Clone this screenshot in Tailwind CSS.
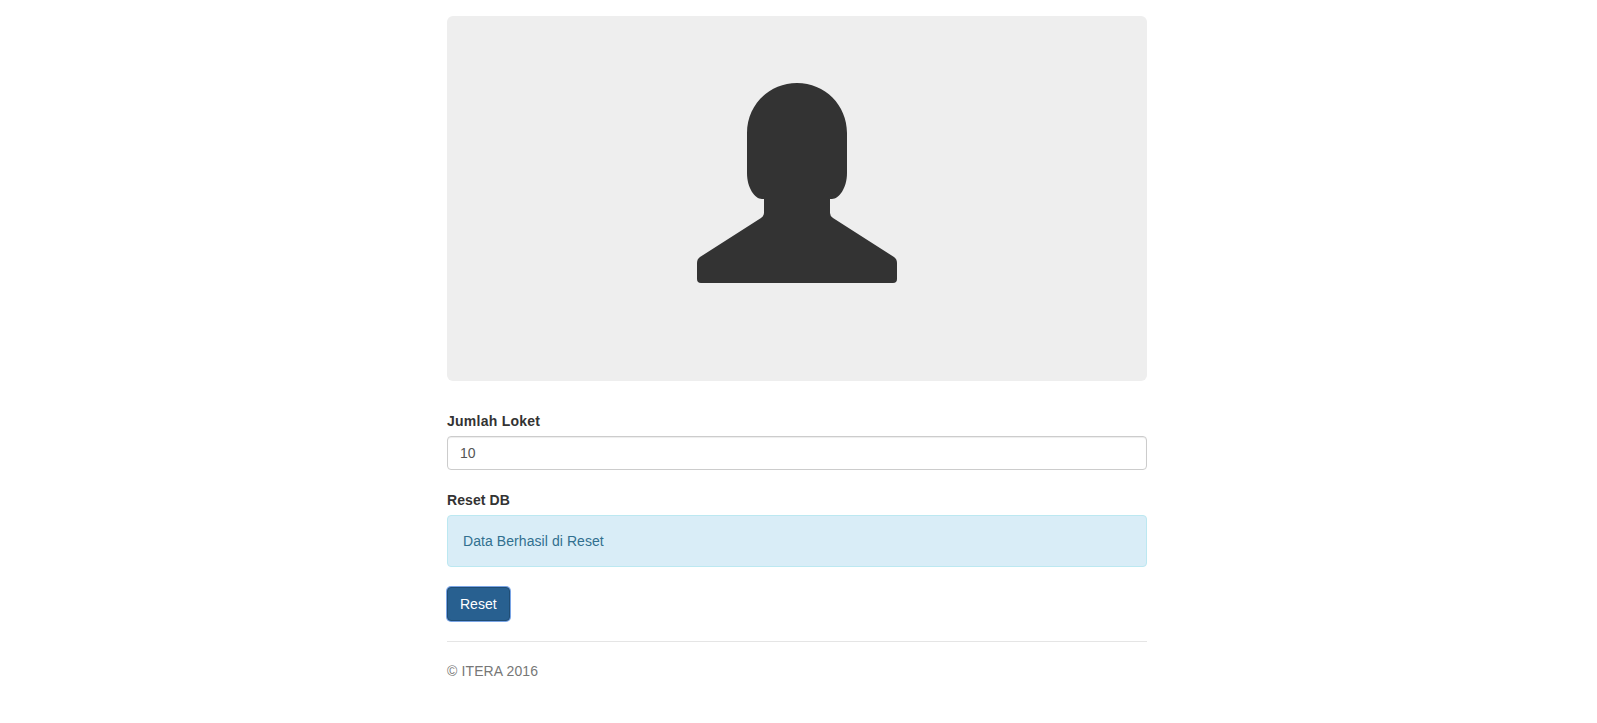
<!DOCTYPE html>
<html lang="id">
<head>
<meta charset="utf-8">
<title>Reset DB</title>
<script src="https://cdn.jsdelivr.net/npm/@tailwindcss/browser@4"></script>
</head>
<body class="bg-white font-['Liberation_Sans',Arial,sans-serif] text-[14px] leading-[20px] text-[#333]">
<div class="ml-[447px] w-[700px] pt-4">
  <div class="flex h-[365px] items-center justify-center rounded-md bg-[#eee] pb-[31px]">
    <svg class="h-[200px] w-[200px]" viewBox="0 0 200 200" aria-hidden="true">
      <path fill="#333" d="M100 0C72 0 50 22 50 50V90C50 105 58 116 65 116H67V130Q67 133 64 135L3 174Q0 176 0 180V196Q0 200 4 200H196Q200 200 200 196V180Q200 176 197 174L136 135Q133 133 133 130V116H135C142 116 150 105 150 90V50C150 22 128 0 100 0Z"/>
    </svg>
  </div>
  <form class="mt-[30px]">
    <label class="mb-[5px] block font-bold tracking-[0.25px]">Jumlah Loket</label>
    <input type="text" value="10" class="block h-[34px] w-full rounded border border-[#ccc] bg-white px-3 py-1.5 text-[14px] text-[#555] shadow-[inset_0_1px_1px_rgba(0,0,0,0.075)] outline-none">
    <label class="mt-5 mb-[5px] block font-bold tracking-[0.1px]">Reset DB</label>
    <div class="rounded border border-[#bce8f1] bg-[#d9edf7] p-[15px] tracking-[0.07px] text-[#31708f]">Data Berhasil di Reset</div>
    <button type="button" class="mt-5 block h-[34px] rounded border border-[#204d74] bg-[#286090] px-3 text-white shadow-[0_0_0_1px_#7aa5e6]">Reset</button>
  </form>
  <hr class="mt-5 border-t border-[#e5e5e5]">
  <footer class="mt-[19px] tracking-[0.12px] text-[#777]">© ITERA 2016</footer>
</div>
</body>
</html>
